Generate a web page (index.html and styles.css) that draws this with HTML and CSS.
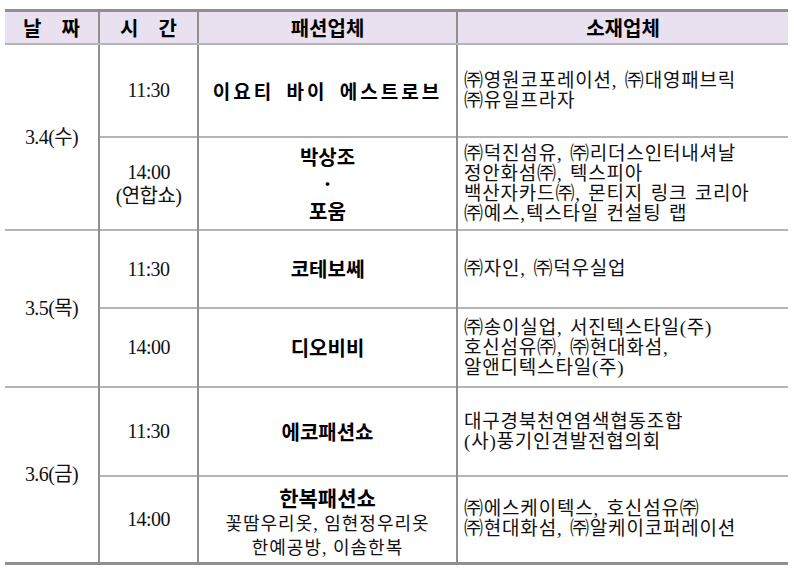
FILE: index.html
```html
<!DOCTYPE html>
<html lang="ko">
<head>
<meta charset="utf-8">
<title>패션쇼 일정</title>
<link rel="stylesheet" href="styles.css">
</head>
<body>
<table class="schedule">
  <colgroup>
    <col class="c-date">
    <col class="c-time">
    <col class="c-brand">
    <col class="c-mat">
  </colgroup>
  <thead>
    <tr>
      <th>날&emsp;짜</th>
      <th>시&emsp;간</th>
      <th>패션업체</th>
      <th>소재업체</th>
    </tr>
  </thead>
  <tbody>
    <tr class="h93 group">
      <td class="date" rowspan="2">3.4(수)</td>
      <td class="time">11:30</td>
      <td class="brand spaced">이요티 바이 에스트로브</td>
      <td class="mat">㈜영원코포레이션, ㈜대영패브릭<br>㈜유일프라자</td>
    </tr>
    <tr class="h93 sub">
      <td class="time two">14:00<br>(연합쇼)</td>
      <td class="brand stack">박상조<br>·<br>포움</td>
      <td class="mat">㈜덕진섬유, ㈜리더스인터내셔날<br>정안화섬㈜, 텍스피아<br>백산자카드㈜, 몬티지 링크 코리아<br>㈜예스,텍스타일 컨설팅 랩</td>
    </tr>
    <tr class="h78 group">
      <td class="date" rowspan="2">3.5(목)</td>
      <td class="time">11:30</td>
      <td class="brand">코테보쎄</td>
      <td class="mat">㈜자인, ㈜덕우실업</td>
    </tr>
    <tr class="h79 sub">
      <td class="time">14:00</td>
      <td class="brand">디오비비</td>
      <td class="mat">㈜송이실업, 서진텍스타일(주)<br>호신섬유㈜, ㈜현대화섬,<br>알앤디텍스타일(주)</td>
    </tr>
    <tr class="h89 group">
      <td class="date" rowspan="2">3.6(금)</td>
      <td class="time">11:30</td>
      <td class="brand">에코패션쇼</td>
      <td class="mat">대구경북천연염색협동조합<br>(사)풍기인견발전협의회</td>
    </tr>
    <tr class="h87 sub">
      <td class="time">14:00</td>
      <td class="brand multi"><span class="title">한복패션쇼</span><br>꽃땀우리옷, 임현정우리옷<br>한예공방, 이솜한복</td>
      <td class="mat">㈜에스케이텍스, 호신섬유㈜<br>㈜현대화섬, ㈜알케이코퍼레이션</td>
    </tr>
  </tbody>
</table>
</body>
</html>
```
FILE: styles.css
```css
html, body {
  margin: 0;
  padding: 0;
  background: #ffffff;
}

body {
  padding: 9px 6px 0 5px;
  font-family: "Liberation Serif", "Noto Sans CJK KR", serif;
  color: #111;
}

.schedule {
  width: 783px;
  border-collapse: collapse;
  table-layout: fixed;
  border-top: 3px solid #8f8f8f;
  border-bottom: 3px solid #8f8f8f;
}

.c-date { width: 94px; }
.c-time { width: 99px; }
.c-brand { width: 259px; }
.c-mat { width: 331px; }

.schedule th {
  height: 31px;
  padding: 0;
  background: #e9e0f0;
  font-family: "Noto Sans CJK KR", sans-serif;
  font-weight: 700;
  font-size: 20px;
  line-height: 20px;
  text-align: center;
  color: #000;
  border-bottom: 2px solid #b5b5b5;
  border-left: 2px solid #8f8f8f;
}

.schedule th:first-child { border-left: none; }

.schedule td {
  padding: 0;
  border-left: 2px solid #8f8f8f;
  vertical-align: middle;
}

.schedule td.date { border-left: none; }

.group td { border-top: 2px solid #b5b5b5; }
.sub td { border-top: 2px solid #b5b5b5; }

.h93 { height: 93px; }
.h78 { height: 78px; }
.h79 { height: 79px; }
.h89 { height: 89px; }
.h87 { height: 87px; }

.date, .time {
  text-align: center;
  font-size: 20px;
  line-height: 23px;
  letter-spacing: -0.6px;
}

.time.two { line-height: 24px; }

.brand {
  text-align: center;
  font-family: "Noto Sans CJK KR", sans-serif;
  font-weight: 700;
  font-size: 20px;
  line-height: 22px;
  color: #000;
}

.brand.spaced {
  font-size: 19px;
  letter-spacing: 3px;
  word-spacing: 4px;
}

.brand.stack { line-height: 27px; }

.brand.multi {
  padding-top: 7px;
  font-family: "Liberation Serif", "Noto Sans CJK KR", serif;
  font-weight: 400;
  font-size: 18px;
  line-height: 24px;
  letter-spacing: 1px;
  color: #111;
}

.brand.multi .title {
  font-family: "Noto Sans CJK KR", sans-serif;
  font-weight: 700;
  font-size: 21px;
  letter-spacing: 0;
  color: #000;
}

.mat {
  padding-left: 6px !important;
  font-size: 19px;
  line-height: 20px;
  letter-spacing: 0.8px;
  word-spacing: 2px;
  white-space: nowrap;
}
```
